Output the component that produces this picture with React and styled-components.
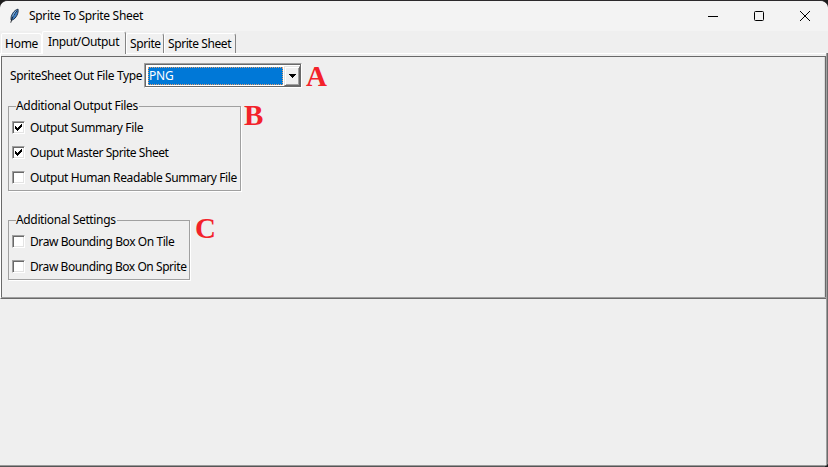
import React from "react";
import styled, { createGlobalStyle } from "styled-components";

const Global = createGlobalStyle`
  * { box-sizing: border-box; }
  body { margin: 0; overflow: hidden; }
`;

const Window = styled.div`
  width: 828px;
  height: 467px;
  display: flex;
  flex-direction: column;
  background: #efefef;
  border-top: 1px solid #2b292b;
  border-bottom: 1px solid #565656;
  border-radius: 8px 8px 5px 0;
  box-shadow: 0 0 0 8px #1c1c1c;
  overflow: hidden;
  color: #000;
  font: 12px/16px "Noto Sans", "Open Sans", sans-serif;
`;

const Text = styled.span`
  white-space: nowrap;
  letter-spacing: ${(p) => p.$spacing ?? -0.25}px;
`;

const TitleBar = styled.header`
  height: 30px;
  flex: none;
  display: flex;
  align-items: center;
  background: #f3f3f3;
  padding-left: 9px;
`;

const Title = styled(Text)`
  margin-left: 9px;
  flex: 1;
`;

const CaptionButton = styled.div`
  width: 46px;
  height: 28px;
  display: flex;
  align-items: center;
  justify-content: center;
`;

const TabBar = styled.nav`
  height: 22px;
  flex: none;
  display: flex;
  align-items: flex-end;
  padding-left: 1px;
`;

const Tab = styled.div`
  width: ${(p) => p.$width}px;
  height: ${(p) => (p.$active ? 23 : 20)}px;
  margin-bottom: ${(p) => (p.$active ? -1 : 0)}px;
  padding: ${(p) => (p.$active ? "2px 0 0 5px" : "2px 0 0 3px")};
  background: #f0f0f0;
  border-top: 1px solid #fff;
  border-left: 1px solid #fff;
  border-right: 1px solid ${(p) => (p.$covered ? "#fff" : "#858585")};
  border-radius: 2px 3px 0 0;
  position: relative;
`;

const Body = styled.div`
  flex: 1;
  border-right: 1px solid #6b6b6b;
  border-bottom: 1px solid #999;
  box-shadow: inset -1px 0 #a0a0a0;
`;

const Panel = styled.main`
  width: 826px;
  height: 246px;
  border-top: 1px solid #fff;
  border-left: 1px solid #fff;
  border-bottom: 1px solid #696969;
  padding-top: 2px;
`;

const PanelInner = styled.div`
  height: 241px;
  border: 1px solid #696969;
  border-width: 1px 1px 0 1px;
  box-shadow: inset -1px 0 #d9d9d9, 0 1px #a0a0a0;
  padding: 6px 0 0 6px;
`;

const Row = styled.div`
  display: flex;
  align-items: flex-start;
  margin-bottom: ${(p) => p.$after ?? 0}px;
`;

const FieldLabel = styled(Text)`
  width: 136px;
  padding: 5px 0 0 2px;
`;

const Combo = styled.div`
  width: 158px;
  height: 25px;
  display: flex;
  background: #fff;
  border: 1px solid;
  border-color: #a0a0a0 #fff #fff #a0a0a0;
  box-shadow: inset 1px 1px #696969, inset -1px -1px #696969;
  padding: 2px 1px 2px 2px;
`;

const Selection = styled.div`
  width: 135px;
  flex: none;
  height: 18px;
  margin: 1px 1px 0 1px;
  line-height: 16px;
  background: #0078d7;
  color: #fff;
  border: 1px dotted #e0a070;
`;

const DropButton = styled.div`
  width: 16px;
  flex: none;
  height: 20px;
  display: flex;
  align-items: center;
  justify-content: center;
  background: #f0f0f0;
  border: 1px solid;
  border-color: #e3e3e3 #696969 #696969 #e3e3e3;
  box-shadow: inset 1px 1px #fff, inset -1px -1px #a0a0a0;
`;

const Group = styled.fieldset`
  width: ${(p) => p.$width}px;
  height: ${(p) => p.$height}px;
  margin: 0;
  min-width: 0;
  padding: 1px 0 0 3px;
  border: 1px solid #a0a0a0;
  box-shadow: 1px 1px #fff;
`;

const Legend = styled.legend`
  width: ${(p) => p.$width}px;
  height: 16px;
  margin-left: 4px;
  padding: 0;
  background: #efefef;
`;

const Option = styled.label`
  height: 25px;
  display: flex;
  align-items: center;
  gap: 5px;
`;

const Box = styled.span`
  width: 13px;
  height: 13px;
  flex: none;
  background: #fff;
  border: 1px solid;
  border-color: #a0a0a0 #fff #fff #a0a0a0;
  box-shadow: inset 1px 1px #696969, inset -1px -1px #e3e3e3;
  display: flex;
  align-items: center;
  justify-content: center;
`;

const Marker = styled.strong`
  margin: ${(p) => p.$offset};
  color: #f3222a;
  font: bold 29px/26px "Liberation Serif", serif;
`;

const Feather = () => (
  <svg width="11" height="16" viewBox="0 0 12 18">
    <path d="M2.2 13.5C1.2 8.6 5.6 2 10 1.3c.8 3.9-1.7 10.2-6.4 12.2z" fill="#3f7fc4" stroke="#17263c" />
    <path d="M1.8 16.5C3 11.5 5.2 7 8.8 3" fill="none" stroke="#10151d" />
    <path d="M4 9.5C5 6.3 6.3 4.6 8 3.2" fill="none" stroke="#9bc8f1" />
  </svg>
);

const Checkbox = ({ label, checked, spacing }) => (
  <Option>
    <Box>
      {checked && (
        <svg width="7" height="7" viewBox="0 0 7 7" shapeRendering="crispEdges">
          <path d="M0 2h1v1h1v1h1V3h1V2h1V1h1V0h1v3H6v1H5v1H4v1H3v1H2V6H1V5H0z" />
        </svg>
      )}
    </Box>
    <Text $spacing={spacing}>{label}</Text>
  </Option>
);

export default function App() {
  return (
    <>
      <Global />
      <Window>
        <TitleBar>
          <Feather />
          <Title $spacing={-0.3}>Sprite To Sprite Sheet</Title>
          <CaptionButton>
            <svg width="10" height="10"><path d="M0 5.5h10" stroke="#000" /></svg>
          </CaptionButton>
          <CaptionButton>
            <svg width="10" height="10"><rect x=".5" y=".5" width="9" height="9" rx="1" fill="none" stroke="#000" /></svg>
          </CaptionButton>
          <CaptionButton>
            <svg width="10" height="10"><path d="M0 0l10 10M10 0L0 10" stroke="#000" /></svg>
          </CaptionButton>
        </TitleBar>
        <TabBar>
          <Tab $width={41} $covered><Text>Home</Text></Tab>
          <Tab $width={84} $active><Text $spacing={-0.35}>Input/Output</Text></Tab>
          <Tab $width={38}><Text $spacing={-0.4}>Sprite</Text></Tab>
          <Tab $width={72}><Text $spacing={-0.42}>Sprite Sheet</Text></Tab>
        </TabBar>
        <Body>
          <Panel>
            <PanelInner>
              <Row $after={9}>
                <FieldLabel $spacing={-0.37}>SpriteSheet Out File Type</FieldLabel>
                <Combo>
                  <Selection><Text>PNG</Text></Selection>
                  <DropButton>
                    <svg width="7" height="4" shapeRendering="crispEdges"><path d="M0 0h7v1H6v1H5v1H4v1H3V3H2V2H1V1H0z" /></svg>
                  </DropButton>
                </Combo>
                <Marker $offset="0 0 0 4px">A</Marker>
              </Row>
              <Row $after={21}>
                <Group $width={233} $height={93}>
                  <Legend $width={123}><Text $spacing={-0.3}>Additional Output Files</Text></Legend>
                  <Checkbox label="Output Summary File" checked spacing={-0.36} />
                  <Checkbox label="Ouput Master Sprite Sheet" checked spacing={-0.45} />
                  <Checkbox label="Output Human Readable Summary File" spacing={-0.39} />
                </Group>
                <Marker $offset="4px 0 0 3px">B</Marker>
              </Row>
              <Row>
                <Group $width={182} $height={68}>
                  <Legend $width={101}><Text $spacing={-0.35}>Additional Settings</Text></Legend>
                  <Checkbox label="Draw Bounding Box On Tile" spacing={-0.42} />
                  <Checkbox label="Draw Bounding Box On Sprite" spacing={-0.44} />
                </Group>
                <Marker $offset="3px 0 0 5px">C</Marker>
              </Row>
            </PanelInner>
          </Panel>
        </Body>
      </Window>
    </>
  );
}
